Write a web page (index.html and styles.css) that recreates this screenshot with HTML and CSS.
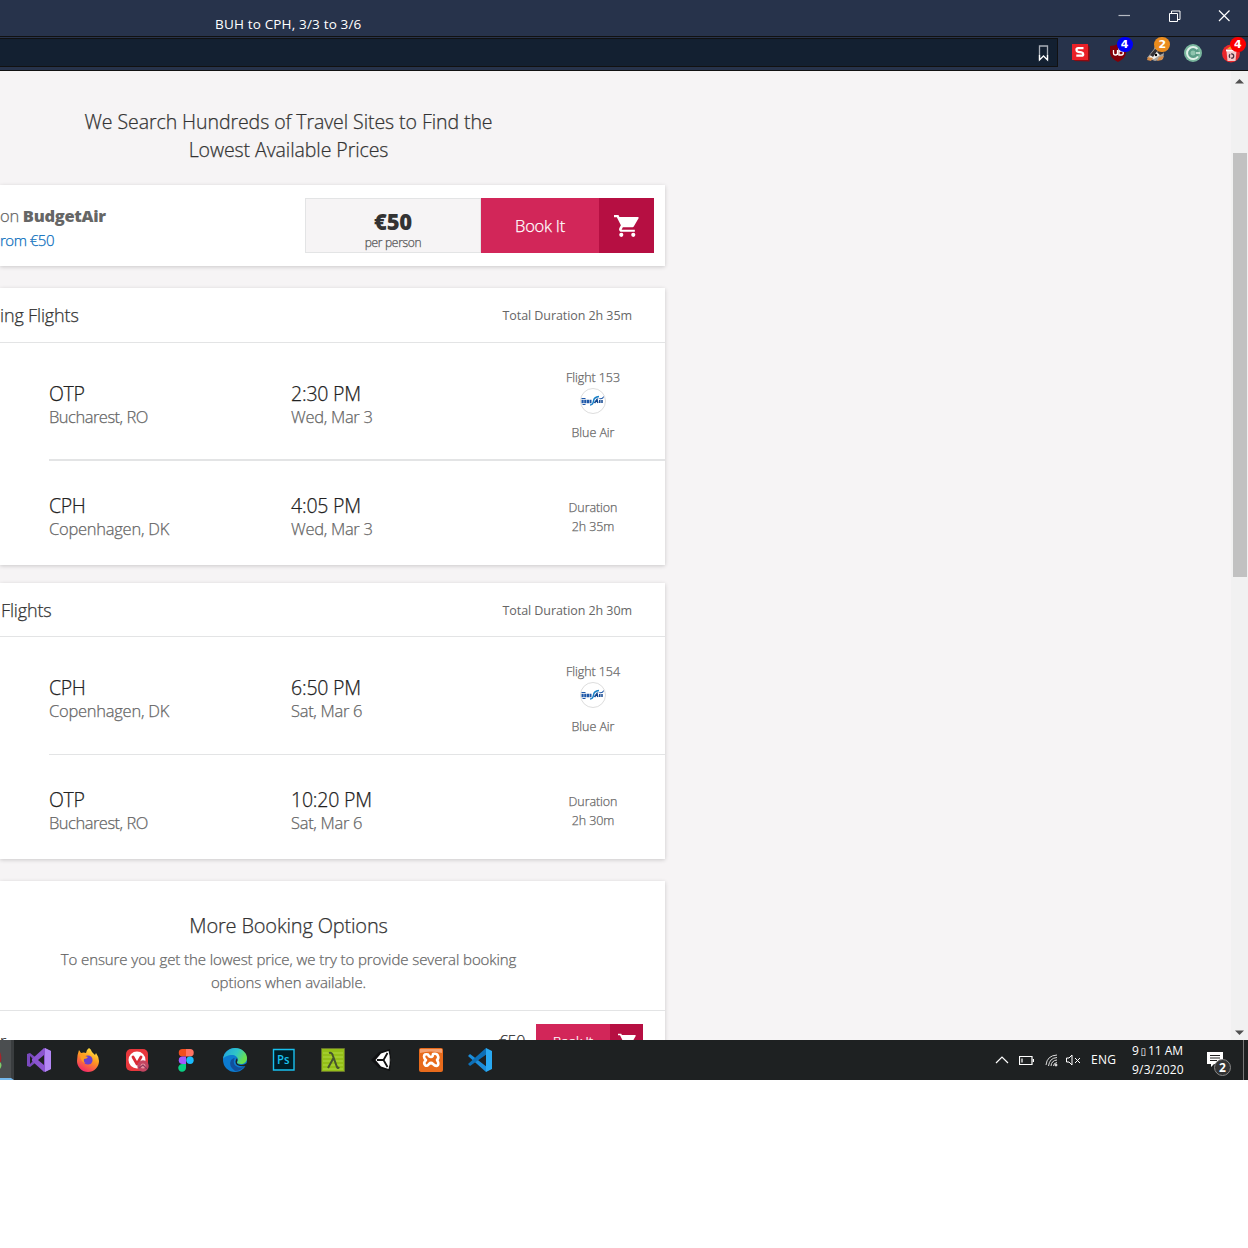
FILE: index.html
```html
<!DOCTYPE html>
<html lang="en">
<head>
<meta charset="utf-8">
<title>BUH to CPH, 3/3 to 3/6</title>
<link rel="stylesheet" href="styles.css">
</head>
<body>
<header class="titlebar">
  <span class="window-title">BUH to CPH, 3/3 to 3/6</span>
  <div class="window-controls">
    <svg viewBox="0 0 14 14"><path d="M1.500 6.500h11.500" stroke="#b5bac3" stroke-width="1.200"/></svg>
    <svg viewBox="0 0 14 14" fill="none" stroke="#fff"><path d="M2.500 4.500h8v8h-8zM4.500 4.500v-2.500h8.500v8.500h-2.500"/></svg>
    <svg viewBox="0 0 14 14" fill="none" stroke="#fff" stroke-width="1.200"><path d="M2 1.500l10.500 10.500M12.500 1.500L2 12"/></svg>
  </div>
</header>
<div class="toolbar">
  <div class="address">
    <svg class="bookmark" viewBox="0 0 12 18" fill="none" stroke-width="1.300"><path d="M1.500 16V2h8v14" stroke="#a9afb8"/><path d="M1.500 11v5l4-4 4 4v-5" stroke="#fff"/></svg>
  </div>
  <div class="extensions">
    <span class="ext"><svg viewBox="0 0 20 20"><path d="M3 18l15.500.5V4L17 2z" fill="#8d0a10"/><path d="M1 1h16v16H1z" fill="#ea2027"/><path d="M12.500 5.200H7.200q-1.700 0-1.700 1.700 0 1.600 1.700 1.900l3.300.6q1.700.3 1.700 1.800 0 1.500-1.700 1.500H5.300" fill="none" stroke="#fff" stroke-width="2.300"/></svg></span>
    <span class="ext"><svg viewBox="0 0 20 20"><path d="M9 1q4 2 8 2v7q-1 6-8 9-7-3-8-9V3q4 0 8-2z" fill="#820008"/><path d="M4.500 7v3q0 2 2 2t2-2V7v5M10 5v7h2.300q2 0 2-2t-2-2H10" fill="none" stroke="#fff" stroke-width="1.300"/></svg><b class="badge blue">4</b></span>
    <span class="ext"><svg viewBox="0 0 20 20"><path d="M1 15l7-9 1-4 5 4 4 4-1 6-8 2z" fill="#a9a49e"/><path d="M2 15l8-7 4 4-6 4z" fill="#f3f0ea"/><path d="M4 12l5-6 3 1-5 7zM11 9l3 3 4-2-4-4z" fill="#343237"/><path d="M2 14l5 1-2 3-4-1zM13 14l5-1-2 4-5 1z" fill="#d78b45"/><circle cx="10" cy="12" r="1.200"/></svg><b class="badge orange">2</b></span>
    <span class="ext"><svg viewBox="0 0 20 20"><circle cx="9" cy="10" r="9" fill="#79b69d"/><circle cx="9" cy="10" r="6" fill="#5b9c87"/><path d="M13.500 6A6 6 0 1 0 14 13.500" fill="none" stroke="#e1f1e9" stroke-width="2"/><circle cx="9" cy="10" r="2.500" fill="#8fc4ae"/><path d="M12 10h4" stroke="#e1f1e9" stroke-width="1.500"/></svg></span>
    <span class="ext"><svg viewBox="0 0 20 20"><circle cx="9" cy="10.500" r="9" fill="#e8262b"/><path d="M5 6l5-4v4z" fill="#f5a623"/><path d="M4.500 8h10l-1 10h-8z" fill="#f4c9c9"/><path d="M4 6.500h11v1.800H4z" fill="#fff"/><circle cx="9.500" cy="13" r="2.200" fill="none" stroke="#4b3340" stroke-width="1.300" stroke-dasharray="3.500 1"/></svg><b class="badge red">4</b></span>
  </div>
</div>
<div class="viewport">
  <main class="column">
    <h1 class="headline">We Search Hundreds of Travel Sites to Find the<br>Lowest Available Prices</h1>
    <section class="card offer">
      <div class="provider">
        <div class="provider-name">on <strong>BudgetAir</strong></div>
        <a class="provider-link">rom €50</a>
      </div>
      <div class="price"><strong class="amount">€50</strong><span class="per">per person</span></div>
      <a class="book"><span class="book-label">Book It</span><span class="book-cart"><svg viewBox="0 0 24 24" fill="#fff"><path d="M7 18a2 2 0 1 0 0 4 2 2 0 0 0 0-4zM18.500 18a2 2 0 1 0 0 4 2 2 0 0 0 0-4zM0 1v2h2.700l3.900 7.800-1.400 2.600C4.300 15 5.400 17 7 17h13v-2H7.300l1.200-2.200h8.800c.8 0 1.500-.4 1.800-1L23.600 4c.3-.5-.1-1.200-.8-1.200H5.200L4.300 1z"/></svg></span></a>
    </section>

    <section class="card flights outgoing">
      <div class="flights-head"><h2>ing Flights</h2><span class="total">Total Duration 2h 35m</span></div>
      <div class="leg depart">
        <div class="place"><b class="code">OTP</b><span class="sub">Bucharest, RO</span></div>
        <div class="when"><b class="time">2:30 PM</b><span class="sub">Wed, Mar 3</span></div>
        <div class="carrier"><span class="flight-no">Flight 153</span><svg class="airline" viewBox="0 0 26 26"><circle cx="13" cy="13" r="12.500" fill="#fff" stroke="#ddd"/><path d="M1.500 10.500h4M2.500 16.500h3" stroke="#1d57a8"/><path d="M1.500 13.500h10" stroke="#1d57a8" stroke-width="3.600" stroke-dasharray="2.200 .5"/><path d="M10 17q3 0 3.500-4t5.500-4.500" fill="none" stroke="#167fc6" stroke-width="1.500"/><path d="M14.500 15l2.500-3.500.8 3.500M19.800 12v3M22 15v-3" fill="none" stroke="#12468f" stroke-width="1.500"/><path d="M18 10.500q4 .3 6-2.500-.3 3.500-4 3.200z" fill="#1d57a8"/></svg><span class="airline-name">Blue Air</span></div>
      </div>
      <div class="leg arrive">
        <div class="place"><b class="code">CPH</b><span class="sub wide">Copenhagen, DK</span></div>
        <div class="when"><b class="time">4:05 PM</b><span class="sub">Wed, Mar 3</span></div>
        <div class="duration"><span class="dur-label">Duration</span><span class="dur">2h 35m</span></div>
      </div>
    </section>

    <section class="card flights returning">
      <div class="flights-head"><h2>Flights</h2><span class="total">Total Duration 2h 30m</span></div>
      <div class="leg depart">
        <div class="place"><b class="code">CPH</b><span class="sub wide">Copenhagen, DK</span></div>
        <div class="when"><b class="time">6:50 PM</b><span class="sub">Sat, Mar 6</span></div>
        <div class="carrier"><span class="flight-no">Flight 154</span><svg class="airline" viewBox="0 0 26 26"><circle cx="13" cy="13" r="12.500" fill="#fff" stroke="#ddd"/><path d="M1.500 10.500h4M2.500 16.500h3" stroke="#1d57a8"/><path d="M1.500 13.500h10" stroke="#1d57a8" stroke-width="3.600" stroke-dasharray="2.200 .5"/><path d="M10 17q3 0 3.500-4t5.500-4.500" fill="none" stroke="#167fc6" stroke-width="1.500"/><path d="M14.500 15l2.500-3.500.8 3.500M19.800 12v3M22 15v-3" fill="none" stroke="#12468f" stroke-width="1.500"/><path d="M18 10.500q4 .3 6-2.500-.3 3.500-4 3.200z" fill="#1d57a8"/></svg><span class="airline-name">Blue Air</span></div>
      </div>
      <div class="leg arrive">
        <div class="place"><b class="code">OTP</b><span class="sub">Bucharest, RO</span></div>
        <div class="when"><b class="time">10:20 PM</b><span class="sub">Sat, Mar 6</span></div>
        <div class="duration"><span class="dur-label">Duration</span><span class="dur">2h 30m</span></div>
      </div>
    </section>

    <section class="card more">
      <div class="more-head">
        <h2 class="more-title">More Booking Options</h2>
        <p class="more-text">To ensure you get the lowest price, we try to provide several booking<br>options when available.</p>
      </div>
      <div class="option">
        <span class="option-name">r</span>
        <span class="option-price">€50</span>
        <a class="book small"><span class="book-label">Book It</span><span class="book-cart"><svg viewBox="0 0 24 24" fill="#fff"><path d="M7 18a2 2 0 1 0 0 4 2 2 0 0 0 0-4zM18.500 18a2 2 0 1 0 0 4 2 2 0 0 0 0-4zM0 1v2h2.700l3.900 7.800-1.400 2.600C4.300 15 5.400 17 7 17h13v-2H7.300l1.200-2.200h8.800c.8 0 1.500-.4 1.800-1L23.600 4c.3-.5-.1-1.200-.8-1.200H5.200L4.300 1z"/></svg></span></a>
      </div>
    </section>
  </main>
  <div class="scrollbar">
    <svg class="arrow" viewBox="0 0 9 5"><path d="M0 4.500L4.500 0 9 4.500z" fill="#505050"/></svg>
    <div class="thumb"></div>
    <svg class="arrow" viewBox="0 0 9 5"><path d="M0 .5h9L4.500 5z" fill="#505050"/></svg>
  </div>
</div>
<footer class="taskbar">
  <div class="active-app"><svg viewBox="0 0 3 20"><path d="M0 2q2 4 1 10H0z" fill="#a5252b"/><path d="M0 12q3 3 0 7z" fill="#7fcb6b"/></svg></div>
  <div class="apps">
    <svg viewBox="0 0 24 24"><path d="M0 6l3-1 14 11V8L3 19l-3-1z" fill="#7a49bd"/><path d="M3 8v8l4-4z" fill="#1e2122"/><path d="M17 0l7 3v18l-7 3L5 13v-2z" fill="#8b55d0"/><path d="M17 7v10l-6-5z" fill="#1e2122"/><path d="M18 0l6 3v18l-6 3z" fill="#b387f5"/></svg>
    <svg viewBox="0 0 24 24"><defs><linearGradient id="fx" x1=".8" y1="0" x2=".3" y2="1"><stop offset="0" stop-color="#fff14a"/><stop offset=".45" stop-color="#ff9a1f"/><stop offset="1" stop-color="#f3246b"/></linearGradient></defs><path d="M13 0q2 1 3 4l3 3 1-2q3 4 3 8a11 11 0 0 1-22 0Q1 7 3 2l2 3q3-1 5 0 0-3 3-5z" fill="url(#fx)"/><circle cx="12" cy="12" r="4.600" fill="#6a3fd0"/><path d="M4 7q3-1 5 1l3 1q-1 2-4 2-1 3 2 4-5 0-6-8z" fill="#ff9d20"/></svg>
    <svg viewBox="0 0 24 24"><rect x="1" y="1" width="22" height="22" rx="5" fill="#e8373c"/><circle cx="12" cy="12" r="8.500" fill="#fff"/><path d="M8 9l4 7 4-7" fill="none" stroke="#d92c36" stroke-width="2.800" stroke-linecap="round" stroke-linejoin="round"/><circle cx="18" cy="18" r="5.700" fill="#c44561"/><circle cx="18" cy="18" r="2.500" fill="#e88f9d"/><path d="M14 20l4-3 4 4" fill="none" stroke="#8f3a5d" stroke-width="1.200"/></svg>
    <svg viewBox="0 0 24 24"><path d="M12 1H8.500a3.700 3.700 0 0 0 0 7.500H12z" fill="#f24e1e"/><path d="M12 1h4a3.700 3.700 0 0 1 0 7.500h-4z" fill="#ff7262"/><path d="M12 8.500H8.500a3.700 3.700 0 0 0 0 7.500H12z" fill="#a259ff"/><circle cx="16" cy="12.300" r="3.700" fill="#1abcfe"/><path d="M12 16H8.500a3.900 3.900 0 1 0 3.500 4z" fill="#0acf83"/></svg>
    <svg viewBox="0 0 24 24"><defs><linearGradient id="ed" x1="0" y1="0" x2="1" y2=".4"><stop offset="0" stop-color="#1f9fe0"/><stop offset=".6" stop-color="#30c6c6"/><stop offset="1" stop-color="#68e04f"/></linearGradient></defs><circle cx="12" cy="12" r="12" fill="#0c7bd0"/><path d="M0 11C1 4 6 0 12 0c7 0 12 5 12 10 0 4-3 6-6 6-3 0-4-1-4-2 1-1 1-2 1-2 0-3-3-5-6-5-4 0-8 2-9 4z" fill="url(#ed)"/><path d="M8 12q-3 6 4 11 6 0 10-5-5 3-9 0-3-2-2-6 2-4-3 0z" fill="#114f9c"/><path d="M14 10q1 2 0 4-1 2 4 3 3 0 6-2l-1 3q-5 1-9-1-3-3 0-7z" fill="#1e2122"/></svg>
    <svg viewBox="0 0 24 24"><path d="M1.500 1.500h20.500v20.500H1.500z" fill="#001d26" stroke="#19c0ee" stroke-width="1.400"/><text x="5" y="16" font-family="Open Sans, sans-serif" font-size="12" font-weight="600" fill="#19c0ee" textLength="12.500" lengthAdjust="spacingAndGlyphs">Ps</text></svg>
    <svg viewBox="0 0 24 24"><path d="M.5.500h23v23H.500z" fill="#94bf18" stroke="#68752c"/><path d="M2 5h20M2 9h20M2 13h20M2 17h20M2 21h20" stroke="#b0d943"/><path d="M8 5q3-1 4 3l4 11q1 2 2 0M12.500 10L7 20" fill="none" stroke="#46542f" stroke-width="2"/></svg>
    <svg viewBox="0 0 24 24"><path d="M1 12L9 4 20 1l1 11-1 11-11-3z" fill="#101112"/><path d="M5.500 12l5.500-6.500L18.500 3l2 9-2 9L11 18.500z" fill="#fff"/><path d="M13.500 12H7M13.500 12l4-7M13.500 12l4 7" stroke="#111" stroke-width="1.800"/><path d="M20.200 8.500v7" stroke="#111" stroke-width="1" fill="none"/></svg>
    <svg viewBox="0 0 24 24"><rect width="24" height="24" rx="2" fill="#e86b1c"/><path d="M1 1h22v4q-11-3-22 0z" fill="#f4a272"/><path d="M9 6.500q-4-1-4 2 0 2 2 3.500-3 3-1 5 2 2 4-1 2-2 4 0 3 3 5 1 1-2-1-5 2-2 1-4-1-3-5-2 0 3-2 3T9 6.500z" fill="none" stroke="#fff" stroke-width="2.600" stroke-linejoin="round"/></svg>
    <svg viewBox="0 0 24 24"><path d="M0 8l2-2 17 13-1 5z" fill="#1c8edb"/><path d="M0 16l2 2L19 6l-1-6z" fill="#0d70b8"/><path d="M18 0l6 3v18l-6 3z" fill="#29a9f2"/></svg>
  </div>
  <div class="tray">
    <svg class="chevron" viewBox="0 0 14 8"><path d="M1 7l6-6 6 6" fill="none" stroke="#fff" stroke-width="1.200"/></svg>
    <svg class="battery" viewBox="0 0 15 9"><path d="M.5.500h12.500v8H.500zM14.500 3v3M3 2.500v4" fill="none" stroke="#fff" stroke-width="1.200"/></svg>
    <svg class="wifi" viewBox="0 0 13 13" fill="none" stroke="#ddd"><path d="M1 11Q2 1.500 12 1M3.500 12q1-8 8.500-8.500M6 12q.5-5.500 6-6M8.500 12q0-3 3.500-3.500"/><circle cx="11" cy="11" r="1" fill="#fff"/></svg>
    <svg class="speaker" viewBox="0 0 15 12" fill="none" stroke="#fff"><path d="M.5 4h2.500L6 1v10L3 8H.500zM9 4l5 5M14 4L9 9"/></svg>
    <span class="lang">ENG</span>
    <div class="clock"><span class="clock-time">9<i class="sep">▯</i>11 AM</span><span class="clock-date">9/3/2020</span></div>
    <div class="notices"><svg viewBox="0 0 16 16"><path d="M0 0h16v12H7l-3 3v-3H0z" fill="#fff"/><path d="M3 3.500h10M3 6h10M3 8.500h7" stroke="#222"/></svg><b class="count">2</b></div>
  </div>
</footer>
</body>
</html>
```
FILE: styles.css
```css
* { box-sizing: border-box; }
body { margin: 0; width: 1248px; height: 1248px; overflow: hidden; background: #fff; font-family: "Open Sans", "Noto Sans", sans-serif; font-weight: 300; color: #333; }
h1, h2, p { margin: 0; font-weight: inherit; }
svg { display: block; flex: none; }

.titlebar { height: 36px; background: #27334b; display: flex; justify-content: space-between; padding-left: 215px; }
.window-title { color: #fff; font-size: 13.5px; letter-spacing: .17px; font-weight: 400; line-height: 20px; padding-top: 14px; }
.window-controls { display: flex; gap: 36px; padding: 9px 17px 0 0; }
.window-controls svg { width: 14px; height: 14px; }

.toolbar { height: 35px; background: #27334b; border-top: 1px solid #111; border-bottom: 1px solid #111; display: flex; padding: 1px 0 3px; }
.address { width: 1058px; background: #132031; border: 1px solid #111; border-left: 0; display: flex; justify-content: flex-end; padding: 5px 7px 0 0; }
.bookmark { width: 12px; height: 18px; }
.extensions { display: flex; gap: 17.7px; padding: 5px 0 0 13px; }
.ext { position: relative; width: 20px; height: 20px; flex: none; }
.ext svg { width: 20px; height: 20px; }
.badge { position: absolute; left: 8px; top: -6px; width: 16px; height: 15px; border-radius: 8px; color: #fff; font: 700 11px/15px "DejaVu Sans", sans-serif; text-align: center; }
.blue { background: #0000fa; }
.orange { background: #ea8c1e; }
.red { background: #fa0000; }

.viewport { height: 969px; background: #f6f4f5; display: flex; justify-content: space-between; overflow: hidden; }
.column { width: 665px; padding-top: 37px; -webkit-text-stroke: .25px currentColor; }
.headline { font-size: 19.5px; letter-spacing: -.07px; line-height: 28px; text-align: center; padding-right: 88px; margin-bottom: 21px; }
.card { background: #fff; box-shadow: 0 1px 4px rgba(0, 0, 0, .18); }

.offer { height: 81px; display: flex; padding: 13px 11px 13px 0; }
.provider { flex: 1; padding-top: 5px; color: #666; }
.provider-name { font-size: 16.5px; letter-spacing: -.3px; line-height: 26px; }
.provider-name strong { font-weight: 800; -webkit-text-stroke: 0; }
.provider-link { display: block; font-size: 15px; letter-spacing: -.5px; line-height: 22px; color: #0a6ebd; }
.price { width: 176px; border: 1px solid #e3e4e5; background: #f6f4f5; display: flex; flex-direction: column; align-items: center; }
.amount { font-size: 22px; letter-spacing: -.2px; font-weight: 800; line-height: 26px; padding-top: 9px; -webkit-text-stroke: 0; }
.per { font-size: 12px; letter-spacing: -.3px; line-height: 17px; color: #555; }
.book { display: flex; color: #fff; background: #d22659; }
.book-label { width: 118px; font-size: 16.5px; letter-spacing: -.25px; line-height: 55px; text-align: center; }
.book-cart { width: 55px; background: #b60f42; display: flex; align-items: center; justify-content: center; padding-top: 1px; }
.book-cart svg { width: 25px; height: 25px; }

.flights { margin-top: 22px; height: 277px; }
.returning { margin-top: 18px; height: 276px; }
.flights-head { height: 55px; border-bottom: 1px solid #e3e4e5; display: flex; justify-content: space-between; align-items: center; padding-right: 33px; }
.flights-head h2 { font-size: 18px; letter-spacing: -.15px; }
.total { font-size: 12.5px; letter-spacing: -.07px; color: #666; font-weight: 400; -webkit-text-stroke: 0; }
.returning .flights-head { height: 54px; }
.returning .total { padding-top: 1px; }
.returning h2 { padding-left: 1px; }
.leg { margin-left: 49px; display: grid; grid-template-columns: 242px 230px 144px; }
.depart { height: 118px; border-bottom: 2px solid #e3e4e5; padding-top: 36px; }
.returning .depart { border-bottom-width: 1px; }
.arrive { height: 104px; padding-top: 30px; }
.place, .when, .carrier, .duration { display: flex; flex-direction: column; }
.code, .time { font-size: 19.5px; letter-spacing: -.35px; line-height: 29px; margin-bottom: -1px; font-weight: inherit; color: #222; }
.time { letter-spacing: -.2px; }
.sub { font-size: 16.5px; letter-spacing: -.5px; line-height: 20px; color: #666; }
.wide { letter-spacing: -.25px; }
.when .sub { letter-spacing: -.3px; }
.carrier, .duration { align-items: center; font-size: 12.5px; letter-spacing: -.07px; line-height: 19px; color: #666; }
.carrier { margin-top: -11px; }
.airline { width: 26px; height: 26px; margin: 1px 0 9px; }
.duration { padding-top: 7px; }

.more { margin-top: 22px; height: 200px; }
.more-head { height: 130px; border-bottom: 1px solid #e3e4e5; padding: 30px 88px 0 0; text-align: center; }
.more-title { font-size: 20px; letter-spacing: -.17px; line-height: 30px; }
.more-text { font-size: 15px; letter-spacing: -.08px; line-height: 23px; padding-top: 7px; color: #666; }
.option { display: flex; align-items: flex-start; padding: 13px 22px 0 0; }
.option-name, .option-price { font-size: 16px; letter-spacing: -.4px; line-height: 34px; }
.option-price { margin-left: auto; margin-right: 11px; }
.small .book-label { width: 74px; font-size: 13px; letter-spacing: -.1px; line-height: 35px; }
.small .book-cart { width: 33px; }
.small .book-cart svg { width: 18px; height: 18px; }

.scrollbar { width: 17px; background: #f1f1f1; display: flex; flex-direction: column; align-items: center; padding: 8px 0 5px; }
.arrow { width: 9px; height: 5px; }
.thumb { width: 14px; height: 424px; margin: 69px 0 auto 1px; background: #c1c1c1; }

.taskbar { height: 40px; background: #1e2122; display: flex; }
.active-app { width: 14px; background: #4b4e50; border-right: 3px solid #3a3d3f; border-bottom: 2px solid #76b9ed; padding-top: 10px; }
.active-app svg { width: 3px; height: 20px; }
.apps { display: flex; gap: 25px; padding: 8px 0 0 13px; }
.apps svg { width: 24px; height: 24px; }
.tray { margin-left: auto; display: flex; align-items: center; color: #fff; font-size: 12px; font-weight: 400; padding-right: 4px; }
.chevron { width: 14px; height: 8px; margin-right: 10px; }
.battery { width: 15px; height: 9px; margin-right: 11px; }
.wifi { width: 13px; height: 13px; margin-right: 8px; }
.speaker { width: 15px; height: 12px; margin-right: 10px; }
.lang { width: 26px; letter-spacing: .3px; margin-right: 15px; padding-bottom: 1px; }
.clock { width: 52px; display: flex; flex-direction: column; line-height: 19px; margin-right: 23px; white-space: nowrap; }
.clock-date { letter-spacing: .25px; }
.sep { display: inline-block; width: 9px; text-align: center; font: 10px/1 "DejaVu Sans", sans-serif; }
.notices { position: relative; width: 37px; height: 40px; padding-top: 12px; border-right: 1px solid #777; }
.notices svg { width: 16px; height: 16px; }
.count { position: absolute; left: 7px; top: 19px; width: 17px; height: 17px; border: 1px solid #888; border-radius: 50%; background: #333; font-size: 12px; line-height: 15px; text-align: center; }
```
